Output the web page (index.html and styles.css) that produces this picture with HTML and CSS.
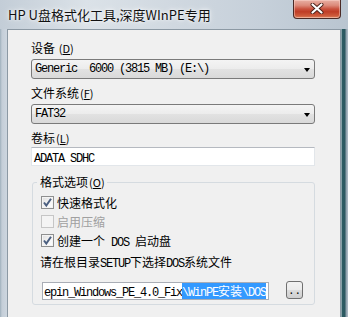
FILE: index.html
```html
<!DOCTYPE html>
<html>
<head>
<meta charset="utf-8">
<link rel="stylesheet" href="styles.css">
</head>
<body>
<div class="window">
  <div class="titlebar">
    <span class="title">HP U盘格式化工具,深度WInPE专用</span>
    <div class="close">
      <svg width="14" height="11" viewBox="0 0 14 11">
        <path d="M2.5 1.5 L11.5 9.5 M11.5 1.5 L2.5 9.5" stroke="#4a2018" stroke-width="4" stroke-linecap="round"/>
        <path d="M2.5 1.5 L11.5 9.5 M11.5 1.5 L2.5 9.5" stroke="#ffffff" stroke-width="2.2" stroke-linecap="round"/>
      </svg>
    </div>
  </div>
  <div class="client">
    <div class="label">设备 <span class="acc">(<u>D</u>)</span></div>
    <div class="combo"><span class="mono">Generic  6000 (3815 MB) (E:\)</span><span class="arrow"></span></div>
    <div class="label gap">文件系统<span class="acc">(<u>F</u>)</span></div>
    <div class="combo"><span class="mono">FAT32</span><span class="arrow"></span></div>
    <div class="label gap">卷标<span class="acc">(<u>L</u>)</span></div>
    <div class="textbox"><span class="mono">ADATA SDHC</span></div>
    <fieldset class="group">
      <legend>格式选项<span class="acc">(<u>O</u>)</span></legend>
      <div class="check-row"><span class="cb checked"><svg width="11" height="11" viewBox="0 0 11 11"><path d="M2 5.5 L4.3 8.5 L9 1.8" fill="none" stroke="#4b5f80" stroke-width="2"/></svg></span><span>快速格式化</span></div>
      <div class="check-row disabled"><span class="cb"></span><span>启用压缩</span></div>
      <div class="check-row"><span class="cb checked"><svg width="11" height="11" viewBox="0 0 11 11"><path d="M2 5.5 L4.3 8.5 L9 1.8" fill="none" stroke="#4b5f80" stroke-width="2"/></svg></span><span>创建一个<span class="mono"> DOS </span>启动盘</span></div>
      <div class="hint">请在根目录<span class="mono">SETUP</span>下选择<span class="mono">DOS</span>系统文件</div>
      <div class="path-row">
        <div class="pathbox"><span class="mono">epin_Windows_PE_4.0_Fix</span><span class="sel"><span class="mono">\WinPE</span>安装<span class="mono">\DOS</span></span></div>
        <div class="browse"><span class="dots">..</span></div>
      </div>
    </fieldset>
  </div>
</div>
</body>
</html>
```

FILE: styles.css
```css
html, body {
  margin: 0;
  padding: 0;
}
body {
  width: 348px;
  height: 317px;
  overflow: hidden;
  font-family: "Noto Sans CJK SC", "Noto Sans", sans-serif;
  font-size: 12px;
  color: #000;
}
.window {
  width: 348px;
  height: 317px;
  display: flex;
  flex-direction: column;
  background: linear-gradient(to right, #9fb0bc 0, #c4ced8 2px, #cdd6df 7px, #cdd6df 340px, #dfe6ea 341px, #2e5c64 342px, #2b5860 345px, #8a9ca8 346px, #b4c0ca 348px);
  overflow: hidden;
}
.titlebar {
  height: 29px;
  flex: none;
  display: flex;
  align-items: flex-start;
  justify-content: space-between;
  background: linear-gradient(to right, #c3cdd7 0, #dbe2e8 25%, #d0d8e0 50%, #c6d0da 75%, #b9c5d0 100%);
}
.title {
  margin: 6px 0 0 8px;
  font-size: 13px;
  line-height: 18px;
  color: #111;
  text-shadow: 0 0 6px rgba(255, 255, 255, 0.9), 0 0 3px rgba(255, 255, 255, 0.9);
}
.close {
  width: 46px;
  height: 18px;
  margin-right: 7px;
  border: 1px solid #4a2a26;
  border-top: none;
  border-radius: 0 0 4px 4px;
  background: linear-gradient(#e8b0a4 0, #dc8a7a 30%, #c9513d 50%, #bf3d26 65%, #cf5e3e 90%, #e39a78 100%);
  box-shadow: inset 0 0 0 1px rgba(255, 220, 210, 0.45);
  display: flex;
  align-items: center;
  justify-content: center;
}
.close svg {
  display: block;
  margin-top: -1px;
}
.client {
  flex: 1;
  margin: 0 7px;
  border: 1px solid #8c99a4;
  border-bottom: none;
  background: #f0f0f0;
  padding: 10px 25px 0 23px;
  overflow: hidden;
}
.label {
  height: 16px;
  line-height: 16px;
  white-space: nowrap;
}
.label.gap {
  margin-top: 6px;
}
.acc {
  font-size: 11px;
  margin-left: 1px;
}
.mono {
  font-family: "Liberation Mono", "DejaVu Sans Mono", monospace;
  font-size: 12px;
  letter-spacing: -1.2px;
  white-space: pre;
}
.combo {
  margin-top: 3px;
  height: 20px;
  box-sizing: border-box;
  border: 1px solid #7a7a7a;
  border-radius: 3px;
  background: linear-gradient(#f4f4f4 0, #ececec 50%, #e2e2e2 50%, #d9d9d9 100%);
  display: flex;
  align-items: center;
  justify-content: space-between;
  padding: 0 4px 0 3px;
  line-height: 16px;
}
.arrow {
  width: 0;
  height: 0;
  border-left: 3.5px solid transparent;
  border-right: 3.5px solid transparent;
  border-top: 4px solid #000;
  margin-top: 1px;
}
.textbox {
  margin-top: 1px;
  height: 19px;
  box-sizing: border-box;
  border: 1px solid #e2e6ea;
  border-top-color: #b5b9c0;
  background: #fff;
  padding: 0 2px;
  line-height: 17px;
}
.group {
  margin: 8px 0 0 1px;
  padding: 3px 11px 4px 8px;
  border: 1px solid #d5dbe0;
  border-radius: 3px;
  min-width: 0;
}
.group legend {
  padding: 0 2px 0 3px;
  margin-left: -4px;
  line-height: 16px;
  height: 16px;
}
.check-row {
  height: 19px;
  display: flex;
  align-items: center;
  white-space: nowrap;
}
.check-row.disabled {
  color: #a0a0a0;
}
.cb {
  width: 13px;
  height: 13px;
  box-sizing: border-box;
  border: 1px solid #8e8f8f;
  background: linear-gradient(135deg, #dedede 0, #f6f6f6 60%, #ffffff 100%);
  box-shadow: inset 0 0 0 1px #f4f4f4;
  margin-right: 3px;
  display: flex;
  align-items: center;
  justify-content: center;
}
.check-row.disabled .cb {
  border-color: #c6c6c6;
  background: #f4f4f4;
}
.hint {
  margin: 4px 0 0 -1px;
  height: 16px;
  line-height: 16px;
  white-space: nowrap;
}
.path-row {
  margin-top: 12px;
  display: flex;
  align-items: flex-start;
  gap: 17px;
  padding-left: 1px;
}
.pathbox {
  width: 227px;
  height: 18px;
  box-sizing: border-box;
  border: 1px solid #a9adb5;
  background: #fff;
  padding-left: 1px;
  line-height: 16px;
  white-space: nowrap;
  overflow: hidden;
}
.sel {
  background: #3399ff;
  color: #fff;
  display: inline-block;
  height: 16px;
}
.browse {
  width: 17px;
  height: 18px;
  margin-top: -1px;
  box-sizing: border-box;
  border: 1px solid #707070;
  border-radius: 3px;
  background: linear-gradient(#f2f2f2 0, #ebebeb 50%, #dddddd 50%, #cfcfcf 100%);
  display: flex;
  justify-content: center;
  align-items: flex-end;
}
.dots {
  font-family: "Liberation Mono", monospace;
  font-size: 11px;
  line-height: 14px;
  letter-spacing: 0;
}
```
